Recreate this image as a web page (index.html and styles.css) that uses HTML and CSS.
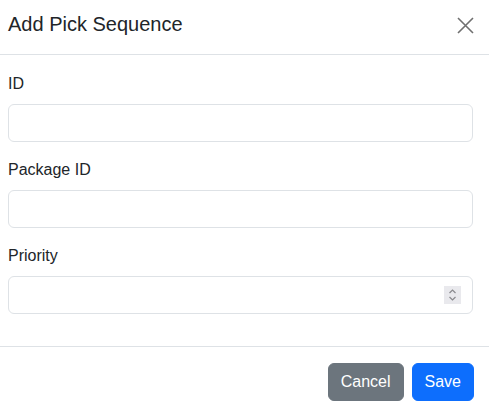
FILE: index.html
```html
<!DOCTYPE html>
<html lang="en">
<head>
  <meta charset="UTF-8" />
  <meta name="viewport" content="width=device-width, initial-scale=1.0"/>
  <title>Add Pick Sequence</title>
  <link rel="stylesheet" href="styles.css">
</head>
<body>
  <div class="modal-content">
    <div class="modal-header">
      <h5 class="modal-title">Add Pick Sequence</h5>
      <button class="btn-close" aria-label="Close">
        <svg width="17" height="17" viewBox="0 0 17 17">
          <path d="M1 1L16 16M16 1L1 16" stroke="#707070" stroke-width="1.6" fill="none"/>
        </svg>
      </button>
    </div>

    <form class="modal-body" onsubmit="return false">
      <div class="field">
        <label for="seqId">ID</label>
        <input type="text" id="seqId" class="form-control" />
      </div>
      <div class="field">
        <label for="packageId">Package ID</label>
        <input type="text" id="packageId" class="form-control" />
      </div>
      <div class="field">
        <label for="priority">Priority</label>
        <div class="number-wrap">
          <input type="number" id="priority" class="form-control" />
          <!-- native spinner only shows on hover, so draw it -->
          <span class="spin">
            <svg width="17" height="18" viewBox="0 0 17 18">
              <path d="M5.5 7L8.5 4L11.5 7M5.5 11L8.5 14L11.5 11" stroke="#8a8a8e" stroke-width="1.2" fill="none"/>
            </svg>
          </span>
        </div>
      </div>
    </form>

    <div class="modal-footer">
      <button class="btn btn-secondary">Cancel</button>
      <button class="btn btn-primary">Save</button>
    </div>
  </div>
</body>
</html>
```

FILE: styles.css
```css
body {
  margin: 0;
  background-color: #fff;
  color: #212529;
  font-family: 'Liberation Sans', Arial, sans-serif;
  font-size: 16px;
  line-height: 1.5;
}

.modal-content {
  width: 489px;
}

.modal-header {
  display: flex;
  align-items: center;
  justify-content: space-between;
  padding: 9px 15px 15px 8px;
  border-bottom: 1px solid #dee2e6;
}

.modal-title {
  margin: 0;
  font-size: 20px;
  font-weight: 400;
  line-height: 30px;
}

.btn-close {
  display: flex;
  padding: 0;
  margin-top: 2px;
  border: none;
  background: none;
  cursor: pointer;
}

.modal-body {
  padding: 17px 16px 16px 8px;
  margin: 0;
}

.field {
  margin-bottom: 16px;
}

.field label {
  display: block;
  margin-bottom: 8px;
}

.form-control {
  display: block;
  box-sizing: border-box;
  width: 100%;
  height: 38px;
  padding: 6px 12px;
  font-family: inherit;
  font-size: 16px;
  color: #212529;
  background-color: #fff;
  border: 1px solid #dee2e6;
  border-radius: 6px;
}

.number-wrap {
  position: relative;
}

.number-wrap input::-webkit-inner-spin-button,
.number-wrap input::-webkit-outer-spin-button {
  -webkit-appearance: none;
  margin: 0;
}

.spin {
  position: absolute;
  top: 10px;
  right: 12px;
  display: flex;
  width: 17px;
  height: 18px;
  background-color: #e9e9ed;
}

.modal-footer {
  display: flex;
  justify-content: flex-end;
  gap: 8px;
  padding: 16px 15px 16px 8px;
  border-top: 1px solid #dee2e6;
}

.btn {
  padding: 6px 12px;
  font-family: inherit;
  font-size: 16px;
  line-height: 24px;
  color: #fff;
  border: 1px solid transparent;
  border-radius: 6px;
  cursor: pointer;
}

.btn-secondary {
  background-color: #6c757d;
  border-color: #6c757d;
}

.btn-primary {
  background-color: #0d6efd;
  border-color: #0d6efd;
}
```
